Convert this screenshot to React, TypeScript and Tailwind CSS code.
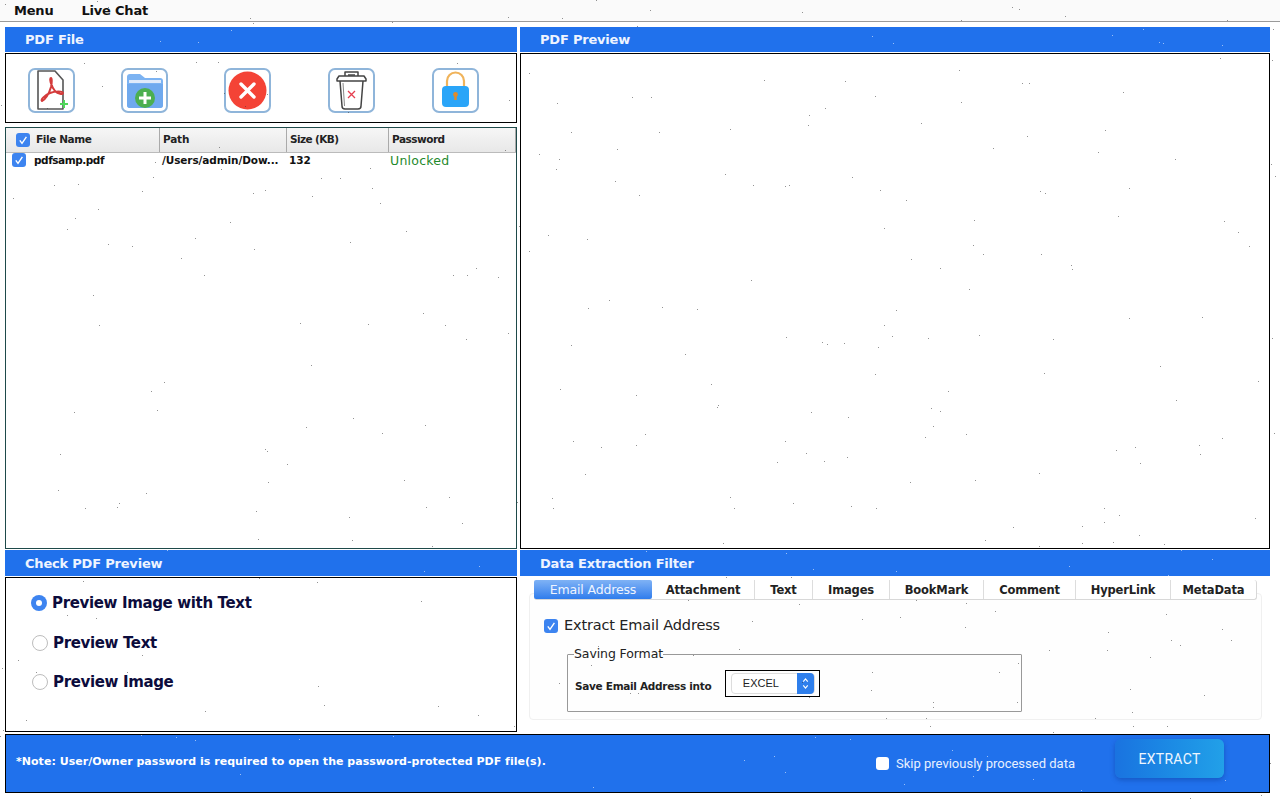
import { ReactNode } from 'react'

const sans = 'font-["DejaVu_Sans",sans-serif]'

function SectionHeader({ title, tall }: { title: string; tall?: boolean }) {
  return (
    <div className={`flex items-center bg-[#2071ec] pl-[20px] text-[13px] font-bold tracking-[-0.2px] text-[#eef4ff] ${tall ? 'h-[26px] pt-[2px]' : 'h-[25px] pt-[1px]'} ${sans}`}>
      {title}
    </div>
  )
}

function Check({ className }: { className: string }) {
  return (
    <span className={`flex shrink-0 items-center justify-center rounded-[3px] bg-[#3d84f0] ${className}`}>
      <svg viewBox="0 0 14 14" className="h-full w-full" fill="none" stroke="#fff" strokeWidth="1.4">
        <path d="M3.8 7.4 6 10.4 10.4 3.8" />
      </svg>
    </span>
  )
}

function IconButton({ className, children }: { className: string; children: ReactNode }) {
  return (
    <button className={`mt-[5px] flex h-[45px] w-[47px] shrink-0 items-center justify-center rounded-[7px] border-2 border-[#8fb5da] bg-white ${className}`}>
      {children}
    </button>
  )
}

function AddPdfIcon() {
  return (
    <svg viewBox="0 0 47 45" className="h-[45px] w-[47px] shrink-0" fill="none">
      <path d="M10 3h17l8 9v29H10z" stroke="#555" strokeWidth="1.6" strokeLinejoin="round" />
      <path
        d="M14 33c3-1 7-7 9-14 1-4 1-9 0-9-2 0 0 8 4 13 3 3 8 4 8 2s-8-2-13 0c-5 2-10 7-8 8z"
        stroke="#d43b3b"
        strokeWidth="2"
      />
      <path d="M36 32v8M32 36h8" stroke="#4fd65a" strokeWidth="2" />
    </svg>
  )
}

function AddFolderIcon() {
  return (
    <svg viewBox="0 0 47 45" className="h-[45px] w-[47px] shrink-0">
      <path d="M6 9a3 3 0 0 1 3-3h10l5 4h15a3 3 0 0 1 3 3v24a3 3 0 0 1-3 3H9a3 3 0 0 1-3-3z" fill="#7cb3f2" />
      <path d="M8 12h32v3H8z" fill="#dfeafa" />
      <path d="M6 16h36v21a3 3 0 0 1-3 3H9a3 3 0 0 1-3-3z" fill="#6fa9ee" />
      <circle cx="24" cy="30" r="10" fill="#4caf50" />
      <path d="M24 24v12M18 30h12" stroke="#fff" strokeWidth="3" />
    </svg>
  )
}

function RemoveIcon() {
  return (
    <svg viewBox="0 0 47 45" className="h-[45px] w-[47px] shrink-0">
      <circle cx="23.5" cy="22.5" r="19" fill="#f44336" />
      <path d="M17 16 30 29M30 16 17 29" stroke="#fff" strokeWidth="3.4" strokeLinecap="round" />
    </svg>
  )
}

function TrashIcon() {
  return (
    <svg viewBox="0 0 47 45" className="h-[45px] w-[47px] shrink-0" fill="none">
      <path d="M17 8V4h13v4M9 11l2-3h25l2 3v2H9z" stroke="#444" strokeWidth="1.5" strokeLinejoin="round" />
      <path d="M20 7h7" stroke="#444" strokeWidth="1.5" />
      <path d="M12 13l2 25a3 3 0 0 0 3 3h13a3 3 0 0 0 3-3l2-25" stroke="#444" strokeWidth="1.5" />
      <path d="M15 15l1.500 23" stroke="#888" strokeWidth="1" />
      <path d="M20 23l7 7M27 23l-7 7" stroke="#e53e4f" strokeWidth="1.300" />
    </svg>
  )
}

function LockIcon() {
  return (
    <svg viewBox="0 0 47 45" className="h-[45px] w-[47px] shrink-0">
      <path d="M15 20v-7a8.500 8.500 0 0 1 17 0v7" fill="none" stroke="#f0b35a" strokeWidth="2.200" />
      <rect x="10" y="18" width="27" height="21" rx="4" fill="#2aa5f8" />
      <circle cx="23.500" cy="26.500" r="2.400" fill="#e08b2a" />
      <path d="M22.300 27h2.400v5h-2.400z" fill="#e08b2a" />
    </svg>
  )
}

function Radio({ label, selected, className }: { label: string; selected?: boolean; className: string }) {
  return (
    <div className={`flex items-center text-[15px] font-bold tracking-[-0.35px] text-[#0c0c3c] ${sans} ${className}`}>
      {selected ? (
        <span className="mr-[5px] flex h-[16px] w-[16px] items-center justify-center rounded-full bg-[#3d84f0]">
          <span className="h-[6px] w-[6px] rounded-full bg-white" />
        </span>
      ) : (
        <span className="ml-[1px] mr-[5px] h-[16px] w-[16px] rounded-full border border-[#bdbdbd] bg-white" />
      )}
      {label}
    </div>
  )
}

// the reference is sprinkled with single-pixel specks
function Specks() {
  let seed = 7
  const next = () => {
    seed = (seed * 16807) % 2147483647
    return seed / 2147483647
  }
  const isBlue = (x: number, y: number) =>
    (y >= 27 && y < 52 && x >= 5 && x < 1270) ||
    (y >= 550 && y < 576 && x >= 5 && x < 1270) ||
    (y >= 734 && y < 793 && x >= 5 && x < 1270)
  const dots = Array.from({ length: 360 }, () => {
    const x = Math.floor(next() * 1280)
    const y = Math.floor(next() * 800)
    return { x, y, fill: isBlue(x, y) ? '#ffffff' : '#3a3a3a' }
  })
  return (
    <svg viewBox="0 0 1280 800" className="pointer-events-none absolute left-0 top-0 h-[800px] w-[1280px]">
      {dots.map((d, i) => (
        <rect key={i} x={d.x} y={d.y} width="1" height="1" fill={d.fill} opacity="0.55" />
      ))}
    </svg>
  )
}

const columns = [
  { label: 'Path', width: 'w-[127px]', tracking: 'tracking-[-0.2px]' },
  { label: 'Size (KB)', width: 'w-[102px]', tracking: 'tracking-[-0.6px]' },
  { label: 'Password', width: 'flex-1', tracking: 'tracking-[-0.5px]' },
]

const tabs = [
  { label: 'Attachment', width: 'w-[103px]' },
  { label: 'Text', width: 'w-[58px]' },
  { label: 'Images', width: 'w-[77px]' },
  { label: 'BookMark', width: 'w-[94px]' },
  { label: 'Comment', width: 'w-[92px]' },
  { label: 'HyperLink', width: 'w-[95px]' },
  { label: 'MetaData', width: 'flex-1' },
]

export default function App() {
  return (
    <div className={`relative h-[800px] w-[1280px] overflow-hidden bg-white ${sans}`}>
      <nav className="flex h-[22px] items-center gap-[28px] border-b border-[#9a9a9a] bg-[#fafafa] pl-[14px] text-[13px] font-semibold tracking-[-0.2px] text-[#111]">
        <span>Menu</span>
        <span>Live Chat</span>
      </nav>

      <div className="ml-[5px] mt-[5px] grid w-[1265px] grid-cols-[512px_750px] gap-x-[3px]">
        <section className="flex flex-col">
          <SectionHeader title="PDF File" />
          <div className="mt-[1px] flex h-[70px] items-center border border-black">
            <IconButton className="ml-[22px]"><AddPdfIcon /></IconButton>
            <IconButton className="ml-[46px]"><AddFolderIcon /></IconButton>
            <IconButton className="ml-[56px]"><RemoveIcon /></IconButton>
            <IconButton className="ml-[57px]"><TrashIcon /></IconButton>
            <IconButton className="ml-[57px]"><LockIcon /></IconButton>
          </div>

          <div className="mt-[4px] h-[422px] border border-[#1e4a4a] text-[10.500px] font-bold text-[#222]">
            <div className="flex h-[25px] items-center border-b border-[#bbb] bg-gradient-to-b from-[#f6f6f6] to-[#e8e8e8]">
              <div className="flex h-full w-[154px] items-center border-r border-[#aaa] pl-[10px]">
                <Check className="h-[14px] w-[14px]" />
                <span className="ml-[6px] tracking-[-0.4px]">File Name</span>
              </div>
              {columns.map((col) => (
                <div key={col.label} className={`flex h-full items-center border-r border-[#aaa] pl-[3px] ${col.width} ${col.tracking}`}>
                  {col.label}
                </div>
              ))}
            </div>
            <div className="flex h-[16px] items-center text-[#111]">
              <div className="flex w-[154px] items-center pl-[6px]">
                <Check className="-mt-[2px] h-[14px] w-[14px]" />
                <span className="ml-[8px] tracking-[-0.45px]">pdfsamp.pdf</span>
              </div>
              <div className="w-[127px] pl-[2px] tracking-[-0.1px]">/Users/admin/Dow...</div>
              <div className="w-[102px] pl-[2px]">132</div>
              <div className="pl-[1px] text-[12.500px] font-normal tracking-[0.25px] text-[#1f8a2c]">Unlocked</div>
            </div>
          </div>

          <div className="mt-[1px]">
            <SectionHeader title="Check PDF Preview" tall />
          </div>
          <div className="mt-[1px] flex h-[155px] flex-col border border-black pl-[25px] pt-[14px]">
            <Radio label="Preview Image with Text" selected className="h-[22px]" />
            <Radio label="Preview Text" className="mt-[18px] h-[22px]" />
            <Radio label="Preview Image" className="mt-[17px] h-[22px]" />
          </div>
        </section>

        <section className="flex flex-col">
          <SectionHeader title="PDF Preview" />
          <div className="mt-[1px] h-[496px] border border-black" />
          <div className="mt-[1px]">
            <SectionHeader title="Data Extraction Filter" tall />
          </div>

          <div className="relative z-10 ml-[14px] mt-[4px] flex h-[20px] w-[723px] rounded-[3px] border-r border-b border-[#d8d8d8] bg-white pt-0 text-[11.500px] font-bold tracking-[-0.15px] text-[#222]">
            <div className="flex w-[118px] items-center justify-center rounded-[2px] bg-gradient-to-b from-[#7fb2f5] to-[#2e7cec] pt-[1px] text-[12.500px] font-normal text-[#eef4ff]">
              Email Address
            </div>
            {tabs.map((tab, i) => (
              <div
                key={tab.label}
                className={`flex items-center justify-center pt-[2px] ${tab.width} ${i < tabs.length - 1 ? 'border-r border-[#ddd]' : ''}`}
              >
                {tab.label}
              </div>
            ))}
          </div>

          <div className="ml-[9px] mt-[-7px] h-[127px] w-[733px] rounded-[4px] border border-[#f0f0f0] bg-[#fefefe] px-[14px] pt-[21px]">
            <div className="flex h-[22px] items-center text-[14.500px] tracking-[-0.15px] text-[#222]">
              <Check className="h-[14px] w-[14px]" />
              <span className="ml-[6px]">Extract Email Address</span>
            </div>
            <fieldset className="ml-[23px] mt-[8px] h-[67px] w-[455px] rounded-[1px] border border-[#999] pl-[6px]">
              <legend className="text-[12.500px] tracking-[-0.1px] text-[#222]">Saving Format</legend>
              <div className="mt-[6px] flex items-center pl-[1px]">
                <span className="mt-[7px] text-[10.500px] font-bold tracking-[-0.3px] text-[#222]">Save Email Address into</span>
                <div className="ml-[14px] flex h-[27px] w-[95px] items-center justify-center border border-black">
                  <div className="flex h-[21px] w-[84px] items-center rounded-[4px] border border-[#ddd] bg-white font-['Liberation_Sans',sans-serif] text-[11px] text-[#222]">
                    <span className="mb-[1px] flex-1 pl-[11px]">EXCEL</span>
                    <span className="flex h-[21px] w-[17px] items-center justify-center rounded-r-[4px] bg-[#2f7fec]">
                      <svg viewBox="0 0 10 16" className="h-[15px] w-[9px]" fill="none" stroke="#fff" strokeWidth="1.300">
                        <path d="M2.500 6 5 3l2.500 3M2.500 10 5 13l2.500-3" />
                      </svg>
                    </span>
                  </div>
                </div>
              </div>
            </fieldset>
          </div>
        </section>
      </div>

      <footer className="ml-[5px] mt-[2px] flex h-[59px] w-[1265px] items-center border border-black bg-[#2071ec] text-white">
        <span className="mb-[3px] ml-[10px] w-[860px] text-[11px] font-bold tracking-[0.03px]">
          *Note: User/Owner password is required to open the password-protected PDF file(s).
        </span>
        <span className="h-[13px] w-[13px] rounded-[3px] bg-white" />
        <span className="ml-[7px] mt-[1px] font-['Roboto',sans-serif] text-[13px] text-[#e8f0ff]">
          Skip previously processed data
        </span>
        <button className="mb-[10px] ml-[40px] h-[39px] w-[109px] rounded-[6px] bg-gradient-to-r from-[#1a73e0] to-[#22a0e8] pt-[2px] font-['Roboto',sans-serif] text-[14px] tracking-[0.3px] text-[#eef6ff] shadow-[0_2px_5px_rgba(0,40,120,0.35)]">
          EXTRACT
        </button>
      </footer>

      <Specks />
    </div>
  )
}
